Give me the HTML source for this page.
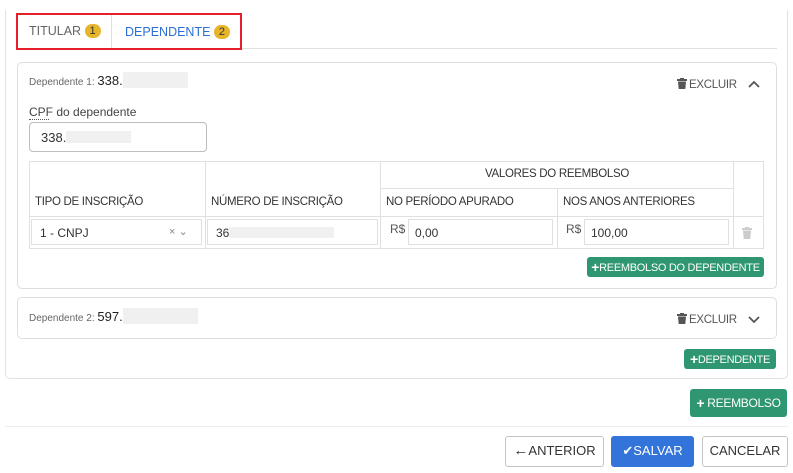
<!DOCTYPE html>
<html><head><meta charset="utf-8"><style>
*{box-sizing:border-box;margin:0;padding:0}
body{width:793px;height:473px;background:#fff;font-family:"Liberation Sans",Arial,sans-serif;color:#333;position:relative;overflow:hidden}
.a{position:absolute}
.outer{left:5px;top:10px;width:783px;height:369px;border:1px solid #e2e2e2;border-top:none;border-radius:0 0 5px 5px}
.card{border:1px solid #dedede;border-radius:5px;left:17px;width:760px}
.lbl{font-size:10px;color:#666}
.num{font-size:13px;color:#222}
.blur{background:#f0f0f0;display:inline-block}
.ex{font-size:11.5px;color:#555;letter-spacing:-.3px}
.btn{color:#fff;background:#2e9670;border-radius:3px;font-size:11px;text-align:center;letter-spacing:-.3px}
.btn b{font-size:14px;font-weight:bold;vertical-align:-1px}
.th{font-size:11.5px;color:#333;letter-spacing:-.3px}
.line{background:#e0e0e0}
.badge{display:inline-block;width:16px;height:14px;border-radius:7px;background:#e6b52c;color:#333;font-size:11px;text-align:center;line-height:14px;vertical-align:1px}
.inp{border:1px solid #e0e0e0;background:#fff;font-size:12px;color:#333}
.fb{border:1px solid #c4c4c4;border-radius:3px;background:#fff;font-size:13px;color:#333;text-align:center;line-height:28px}
</style></head><body>
<div class="a outer"></div>
<div class="a line" style="left:17px;top:48px;width:760px;height:1px"></div>
<div class="a" style="left:16px;top:13px;width:226px;height:37px;border:2px solid #e5202b"></div>
<div class="a line" style="left:111px;top:15px;width:1px;height:33px"></div>
<div class="a" style="left:29px;top:24px;font-size:12.5px;color:#666">TITULAR <span class="badge">1</span></div>
<div class="a" style="left:125px;top:25px;font-size:12.5px;color:#2b6fd6">DEPENDENTE <span class="badge">2</span></div>
<div class="a card" style="top:62px;height:227px"></div>
<div class="a" style="left:29px;top:72px"><span class="lbl">Dependente 1: </span><span class="num">338.</span><span class="blur" style="width:65px;height:16px;vertical-align:-3px"></span></div>
<div class="a ex" style="left:677px;top:78px"><svg width="10" height="11" viewBox="0 0 10 11" style="vertical-align:-1px;margin-right:2px"><rect x="0" y="1" width="10" height="2" fill="#555"/><rect x="3" y="0" width="4" height="2" fill="#555"/><path d="M1 3.5h8l-.7 7.5h-6.6z" fill="#555"/></svg>EXCLUIR</div>
<svg class="a" style="left:748px;top:80px" width="12" height="8" viewBox="0 0 12 8"><path d="M1 7l5-5 5 5" stroke="#555" stroke-width="1.8" fill="none"/></svg>
<div class="a" style="left:29px;top:105px;font-size:12px;color:#444">CPF do dependente</div>
<div class="a" style="left:29px;top:119px;width:20px;border-bottom:1px dotted #555"></div>
<div class="a" style="left:29px;top:122px;width:178px;height:30px;border:1px solid #bdbdbd;border-radius:4px;font-size:13px;padding:7px 0 0 11px">338.<span class="blur" style="width:65px;height:12px;vertical-align:-1px"></span></div>
<div class="a" style="left:29px;top:161px;width:735px;height:88px;border:1px solid #e0e0e0"></div>
<div class="a line" style="left:205px;top:161px;width:1px;height:88px"></div>
<div class="a line" style="left:380px;top:161px;width:1px;height:88px"></div>
<div class="a line" style="left:557px;top:188px;width:1px;height:61px"></div>
<div class="a line" style="left:733px;top:161px;width:1px;height:88px"></div>
<div class="a line" style="left:380px;top:188px;width:353px;height:1px"></div>
<div class="a line" style="left:29px;top:216px;width:735px;height:1px"></div>
<div class="a th" style="left:381px;top:168px;width:352px;text-align:center">VALORES DO REEMBOLSO</div>
<div class="a th" style="left:35px;top:196px">TIPO DE INSCRIÇÃO</div>
<div class="a th" style="left:211px;top:196px">NÚMERO DE INSCRIÇÃO</div>
<div class="a th" style="left:386px;top:196px">NO PERÍODO APURADO</div>
<div class="a th" style="left:563px;top:196px">NOS ANOS ANTERIORES</div>
<div class="a inp" style="left:31px;top:219px;width:171px;height:26px;padding:6px 0 0 8px">1 - CNPJ<span style="position:absolute;left:137px;top:5px;color:#888;font-size:11px">× ⌄</span></div>
<div class="a inp" style="left:207px;top:219px;width:171px;height:26px;padding:6px 0 0 8px">36<span class="blur" style="width:105px;height:11px;vertical-align:-1px"></span></div>
<div class="a" style="left:390px;top:222px;font-size:12px;color:#555">R$</div>
<div class="a inp" style="left:408px;top:219px;width:145px;height:26px;padding:6px 0 0 6px">0,00</div>
<div class="a" style="left:566px;top:222px;font-size:12px;color:#555">R$</div>
<div class="a inp" style="left:584px;top:219px;width:145px;height:26px;padding:6px 0 0 6px">100,00</div>
<svg class="a" style="left:742px;top:227px" width="10" height="12" viewBox="0 0 10 12"><rect x="0" y="1" width="10" height="2" fill="#ccc"/><rect x="3" y="0" width="4" height="2" fill="#ccc"/><path d="M1 3.5h8l-.7 8.5h-6.6z" fill="#ccc"/></svg>
<div class="a btn" style="left:587px;top:257px;width:177px;height:20px;line-height:20px"><b>+</b>REEMBOLSO DO DEPENDENTE</div>
<div class="a card" style="top:297px;height:42px"></div>
<div class="a" style="left:29px;top:308px"><span class="lbl">Dependente 2: </span><span class="num">597.</span><span class="blur" style="width:75px;height:16px;vertical-align:-3px"></span></div>
<div class="a ex" style="left:677px;top:313px"><svg width="10" height="11" viewBox="0 0 10 11" style="vertical-align:-1px;margin-right:2px"><rect x="0" y="1" width="10" height="2" fill="#555"/><rect x="3" y="0" width="4" height="2" fill="#555"/><path d="M1 3.5h8l-.7 7.5h-6.6z" fill="#555"/></svg>EXCLUIR</div>
<svg class="a" style="left:748px;top:316px" width="12" height="8" viewBox="0 0 12 8"><path d="M1 1l5 5 5-5" stroke="#555" stroke-width="1.8" fill="none"/></svg>
<div class="a btn" style="left:684px;top:349px;width:92px;height:20px;line-height:20px"><b>+</b>DEPENDENTE</div>
<div class="a btn" style="left:690px;top:389px;width:97px;height:28px;line-height:28px;font-size:12px"><b>+</b> REEMBOLSO</div>
<div class="a line" style="left:5px;top:426px;width:783px;height:1px;background:#ececec"></div>
<div class="a fb" style="left:505px;top:436px;width:99px;height:31px"><b style="font-size:15px">←</b>ANTERIOR</div>
<div class="a fb" style="left:611px;top:436px;width:83px;height:31px;background:#3274d9;border-color:#3274d9;color:#fff">✔SALVAR</div>
<div class="a fb" style="left:702px;top:436px;width:86px;height:31px">CANCELAR</div>
</body></html>
